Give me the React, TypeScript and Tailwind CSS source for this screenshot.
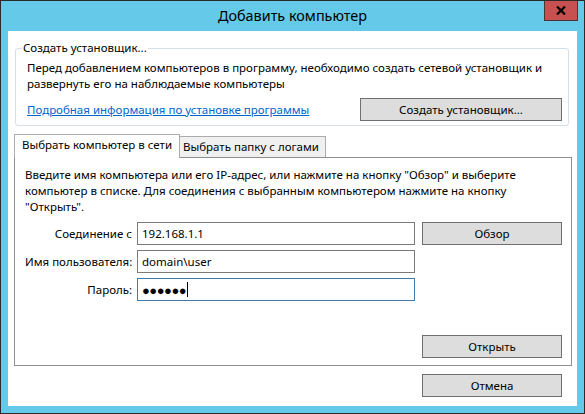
import type { ReactNode } from 'react'

const font = "font-['Noto_Sans','Open_Sans',sans-serif]"

function Button({ children, className = '' }: { children: ReactNode; className?: string }) {
  return (
    <div
      className={`flex items-center justify-center h-[23px] bg-[#dddddd] border border-[#707070] text-[11.5px] text-black ${className}`}
    >
      {children}
    </div>
  )
}

function Field({ label, children, focused }: { label: string; children: ReactNode; focused?: boolean }) {
  return (
    <div className="flex items-center">
      <div className="w-[107px] text-right text-[11.5px] leading-[16px] text-black whitespace-nowrap">{label}</div>
      <div
        className={`ml-[5px] w-[278px] h-[23px] flex items-center px-[4px] border bg-white text-[11.5px] text-black ${
          focused ? 'border-[#3d7bad]' : 'border-[#7a7a7a]'
        }`}
      >
        {children}
      </div>
    </div>
  )
}

function CloseIcon() {
  return (
    <svg width="10" height="9" viewBox="0 0 10 9">
      <path d="M1 0.5 L9 8.5 M9 0.5 L1 8.5" stroke="#000" strokeWidth="2.2" />
    </svg>
  )
}

export default function App() {
  return (
    <div className={`w-[585px] h-[414px] border border-[#2b2b2b] bg-[#65c9e9] flex flex-col ${font}`}>
      <div className="h-[30px] grid grid-cols-[1fr_auto_1fr] items-center">
        <div />
        <div className="text-[14.4px] leading-[20px] text-black">Добавить компьютер</div>
        <div className="flex justify-end self-start mr-[6px]">
          <div className="w-[34px] h-[20px] bg-[#c75050] border border-[#4a3535] border-t-0 flex items-center justify-center">
            <CloseIcon />
          </div>
        </div>
      </div>

      <div className="flex-1 mx-[7px] mb-[7px] bg-white flex flex-col pt-[9px] pb-[9px]">
        <fieldset className="ml-[7px] mr-[8px] border border-[#d5dfe5] rounded-[3px] pb-[4px]">
          <legend className="ml-[6px] px-[1px] text-[11.5px] leading-[16px] text-black">Создать установщик...</legend>
          <div className="pl-[11px] pr-[6px]">
            <p className="mt-[4px] text-[11.5px] leading-[16px] text-black whitespace-nowrap">
              Перед добавлением компьютеров в программу, необходимо создать сетевой установщик и
              <br />
              развернуть его на наблюдаемые компьютеры
            </p>
            <div className="mt-[6px] flex items-center justify-between">
              <a className="text-[11.5px] leading-[16px] text-[#0066cc] underline cursor-pointer">
                Подробная информация по установке программы
              </a>
              <Button className="w-[202px]">Создать установщик...</Button>
            </div>
          </div>
        </fieldset>

        <div className="mt-[8px] ml-[6px] mr-[5px] flex flex-col">
          <div className="flex items-end h-[23px]">
            <div className="relative z-10 -mb-px w-[166px] h-[24px] bg-white border border-b-0 border-[#acacac] pl-[7px] pt-[2px] text-[11.5px] leading-[16px] text-black whitespace-nowrap">
              Выбрать компьютер в сети
            </div>
            <div className="w-[146px] h-[21px] bg-[#f0f0f0] border border-l-0 border-b-0 border-[#acacac] pl-[3px] pt-[2px] text-[11.5px] leading-[16px] text-black whitespace-nowrap">
              Выбрать папку с логами
            </div>
          </div>
          <div className="h-[209px] border border-[#8d8d8d] pl-[10px] pr-[9px] pt-[9px] pb-[7px] flex flex-col">
            <p className="text-[11.5px] leading-[16px] text-black whitespace-nowrap">
              Введите имя компьютера или его IP-адрес, или нажмите на кнопку "Обзор" и выберите
              <br />
              компьютер в списке. Для соединения с выбранным компьютером нажмите на кнопку
              <br />
              "Открыть".
            </p>
            <div className="mt-[7px] flex flex-col gap-[5px]">
              <div className="flex items-center">
                <Field label="Соединение с">192.168.1.1</Field>
                <Button className="ml-[7px] w-[140px]">Обзор</Button>
              </div>
              <Field label="Имя пользователя:">domain\user</Field>
              <Field label="Пароль:" focused>
                <span className="tracking-[-0.5px] text-[13px] leading-[16px]">●●●●●●</span>
                <span className="ml-[1px] w-px h-[15px] bg-black" />
              </Field>
            </div>
            <div className="flex-1" />
            <Button className="self-end w-[140px]">Открыть</Button>
          </div>
        </div>

        <Button className="mt-[8px] self-end mr-[15px] w-[140px]">Отмена</Button>
      </div>
    </div>
  )
}
